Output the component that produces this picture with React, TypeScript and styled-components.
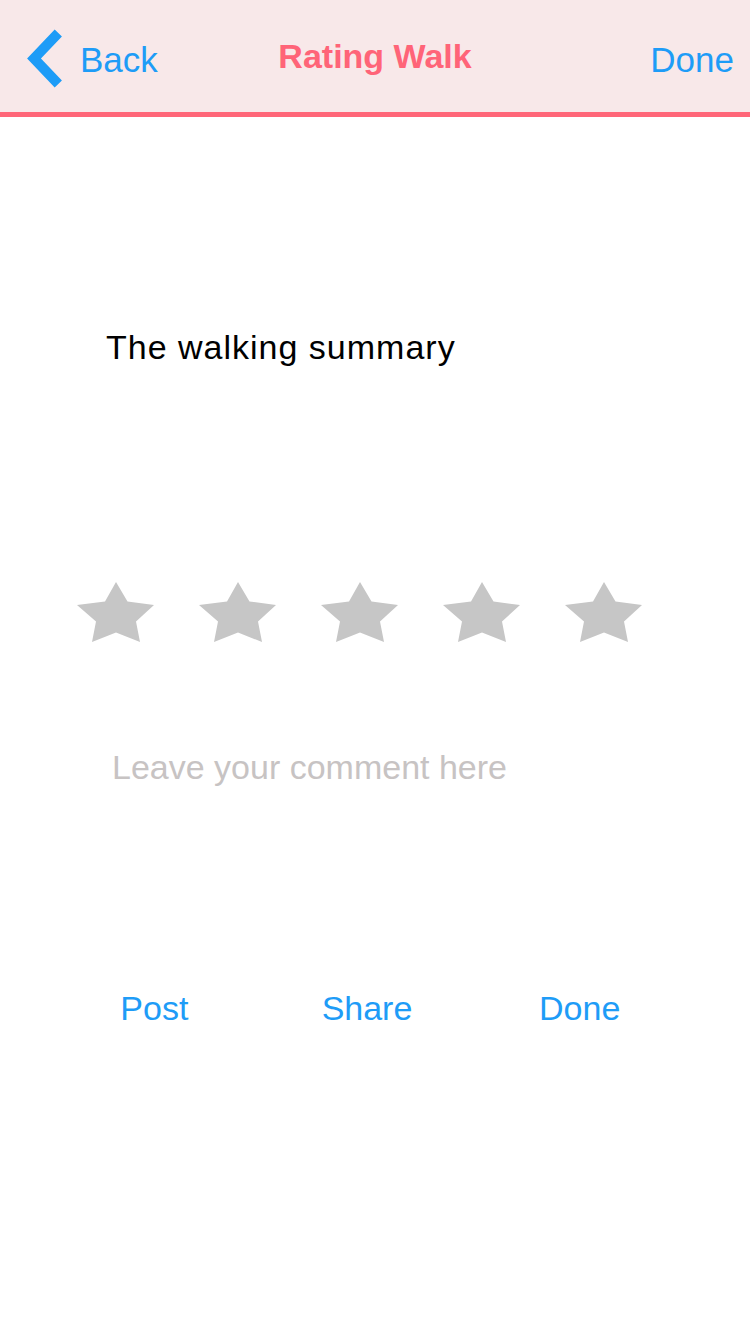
import React, { useState } from "react";
import styled, { createGlobalStyle } from "styled-components";

const GlobalStyle = createGlobalStyle`
  html, body {
    margin: 0;
    padding: 0;
    background: #ffffff;
    font-family: "Liberation Sans", Arial, Helvetica, sans-serif;
  }
  * { box-sizing: border-box; }
`;

const Page = styled.div`
  width: 750px;
  min-height: 1334px;
  background: #ffffff;
  display: flex;
  flex-direction: column;
`;

const Header = styled.header`
  height: 117px;
  background: #f8e8e9;
  border-bottom: 5px solid #ff6678;
  display: grid;
  grid-template-columns: 1fr auto 1fr;
  align-items: start;
  padding: 29px 16px 0 16px;
`;

const NavButton = styled.button<{ $align: "start" | "end" }>`
  display: flex;
  align-items: flex-start;
  justify-self: ${(p) => p.$align};
  margin-left: ${(p) => (p.$align === "start" ? "11px" : "0")};
  gap: 16px;
  padding: 0;
  border: none;
  background: transparent;
  color: #1e9cf7;
  font-family: inherit;
  font-size: 35px;
  line-height: 40px;
  cursor: pointer;
`;

const NavLabel = styled.span`
  display: block;
  margin-top: 11px;
`;

const Title = styled.h1`
  margin: 7px 0 0;
  color: #ff6478;
  font-size: 34px;
  line-height: 40px;
  font-weight: 700;
`;

const Summary = styled.p`
  margin: 210px 0 0;
  padding-left: 106px;
  color: #000000;
  font-size: 34px;
  line-height: 40px;
  letter-spacing: 1px;
`;

const StarRow = styled.div`
  display: flex;
  gap: 45px;
  padding-left: 77px;
  margin-top: 215px;
`;

const StarButton = styled.button`
  width: 77px;
  height: 60px;
  padding: 0;
  border: none;
  background: transparent;
  cursor: pointer;
  display: block;
`;

const Comment = styled.textarea`
  display: block;
  margin: 105px 0 0 112px;
  width: 560px;
  height: 160px;
  padding: 0;
  border: none;
  outline: none;
  resize: none;
  background: transparent;
  font-family: "Liberation Sans", Arial, Helvetica, sans-serif;
  font-size: 34px;
  line-height: 40px;
  color: #333333;
  &::placeholder {
    color: #c7c3c3;
  }
`;

const Actions = styled.div`
  display: grid;
  grid-template-columns: repeat(3, 1fr);
  padding: 0 64px 0 48px;
  margin-top: 81px;
`;

const ActionButton = styled.button`
  justify-self: center;
  padding: 0;
  border: none;
  background: transparent;
  color: #1e9cf7;
  font-family: "Liberation Sans", Arial, Helvetica, sans-serif;
  font-size: 34px;
  line-height: 40px;
  cursor: pointer;
`;

const Chevron = () => (
  <svg width="37" height="59" viewBox="0 0 37 59" style={{ overflow: "visible" }}>
    <polyline
      points="31.3,4 7,29.5 31.3,55"
      fill="none"
      stroke="#1e9cf7"
      strokeWidth="10"
      strokeLinejoin="miter"
      strokeMiterlimit="10"
    />
  </svg>
);

const Star = ({ filled }: { filled: boolean }) => (
  <svg width="77" height="60" viewBox="0 0 77 60">
    <polygon
      points="39,0 28,19.5 0,23 19,39.5 15,60 39,50.5 63,60 59,39.5 77,23 50.5,19.5"
      fill={filled ? "#ffc83d" : "#c6c6c6"}
    />
  </svg>
);

export default function App() {
  const [rating, setRating] = useState(0);
  const [comment, setComment] = useState("");

  return (
    <Page>
      <GlobalStyle />
      <Header>
        <NavButton $align="start">
          <Chevron />
          <NavLabel>Back</NavLabel>
        </NavButton>
        <Title>Rating Walk</Title>
        <NavButton $align="end">
          <NavLabel>Done</NavLabel>
        </NavButton>
      </Header>

      <Summary>The walking summary</Summary>

      <StarRow>
        {[1, 2, 3, 4, 5].map((n) => (
          <StarButton key={n} aria-label={`${n} star`} onClick={() => setRating(n)}>
            <Star filled={n <= rating} />
          </StarButton>
        ))}
      </StarRow>

      <Comment
        placeholder="Leave your comment here"
        value={comment}
        onChange={(e) => setComment(e.target.value)}
      />

      <Actions>
        <ActionButton>Post</ActionButton>
        <ActionButton>Share</ActionButton>
        <ActionButton>Done</ActionButton>
      </Actions>
    </Page>
  );
}
